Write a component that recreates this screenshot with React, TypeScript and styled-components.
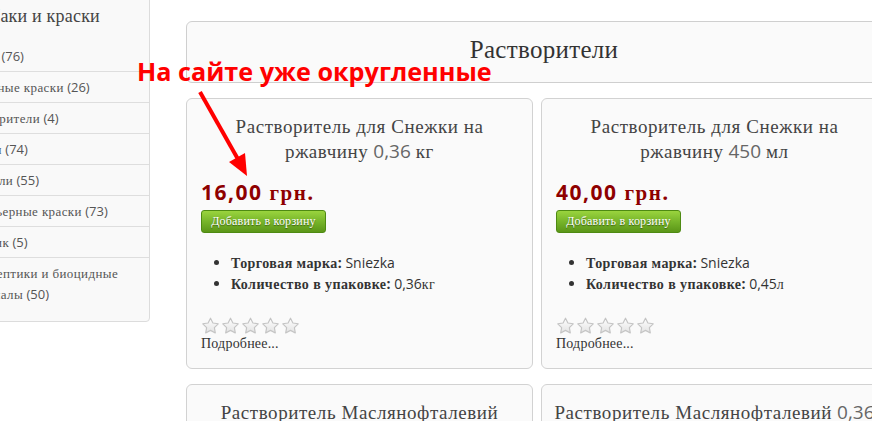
import React from 'react';
import styled, { createGlobalStyle } from 'styled-components';

const GlobalStyle = createGlobalStyle`
  html, body {
    margin: 0;
    padding: 0;
    background: #ffffff;
    overflow: hidden;
  }
  body {
    font-family: "Open Sans", "DejaVu Sans", sans-serif;
    color: #333;
  }
`

// кириллица на сайте уходит в Times, латиница и цифры — Open Sans
const Cy = styled.span`
  font-family: "Liberation Serif", "Times New Roman", serif;
  letter-spacing: 0.03em;
`

const mix = (text: string) =>
  text.split(/([\u0400-\u04FF]+(?:\s+[\u0400-\u04FF]+)*)/).map((part, i) =>
    i % 2 === 1 ? <Cy key={i}>{part}</Cy> : <React.Fragment key={i}>{part}</React.Fragment>
  );

const Page = styled.div`
  position: relative;
  display: flex;
  align-items: flex-start;
  margin-left: -70px;
  width: 1000px;
`

const Sidebar = styled.div`
  box-sizing: border-box;
  width: 220px;
  margin-top: -20px;
  padding: 0 0 12px;
  background: #f9f9f9;
  border: 1px solid #dcdcdc;
  border-radius: 4px;
  flex-shrink: 0;
`

const SideTitle = styled.div`
  font-family: "Liberation Serif", serif;
  font-size: 18px;
  letter-spacing: 0.2px;
  line-height: 24px;
  color: #444;
  padding: 23px 0 13px 57px;
`

const SideList = styled.ul`
  list-style: none;
  margin: 0;
  padding: 0;
`

const SideItem = styled.li`
  padding: 5px 8px 4px 29px;
  font-size: 13px;
  line-height: 21px;
  color: #555;
  & + li {
    border-top: 1px solid #dedede;
  }
`

const Main = styled.div`
  width: 716px;
  margin: 21px 0 0 36px;
  flex-shrink: 0;
`

const HeaderPanel = styled.div`
  box-sizing: border-box;
  height: 62px;
  border: 1px solid #cfcfcf;
  border-radius: 6px;
  background: #fafafa;
  font-family: "Liberation Serif", serif;
  font-size: 25px;
  letter-spacing: 0.3px;
  line-height: 56px;
  text-align: center;
  color: #333;
`

const CardGrid = styled.div`
  display: grid;
  grid-template-columns: 347px 347px;
  column-gap: 8px;
  row-gap: 15px;
  margin-top: 15px;
`

const Card = styled.div`
  box-sizing: border-box;
  height: 271px;
  padding: 15px 14px 15px;
  border: 1px solid #d2d2d2;
  border-radius: 6px;
  background: #fafafa;
  display: flex;
  flex-direction: column;
  align-items: flex-start;
`

const CardTitle = styled.div`
  align-self: stretch;
  margin: 0 -4px;
  font-size: 19px;
  line-height: 24px;
  text-align: center;
  color: #666;
  ${Cy} {
    color: #444;
  }
`

const Price = styled.div`
  margin-top: 16px;
  font-size: 21px;
  font-weight: 700;
  line-height: 24px;
  letter-spacing: 1.5px;
  color: #8e0000;
  ${Cy} {
    letter-spacing: 1.5px;
  }
`

const CartButton = styled.button`
  margin-top: 5px;
  box-sizing: border-box;
  width: 125px;
  height: 28px;
  padding: 0;
  border: 1px solid #4e8a12;
  border-radius: 3px;
  background: linear-gradient(to bottom, #9ad43e 0%, #77b52a 50%, #5b9618 100%);
  font-family: "Liberation Serif", serif;
  font-size: 12px;
  letter-spacing: 0.2px;
  color: #ffffff;
  text-shadow: 0 1px 1px rgba(0, 0, 0, 0.45);
  cursor: pointer;
`

const Props = styled.ul`
  margin: 20px 0 0;
  padding: 0 0 0 30px;
  font-size: 14px;
  line-height: 20px;
  color: #333;
  b {
    font-weight: 700;
  }
`

const Stars = styled.div`
  display: flex;
  gap: 1px;
  margin-top: 22px;
  height: 17px;
`

const More = styled.a`
  margin-top: 1px;
  font-family: "Liberation Serif", serif;
  font-size: 14px;
  letter-spacing: 0.2px;
  line-height: 18px;
  color: #333;
  text-decoration: none;
`

const Note = styled.div`
  position: absolute;
  left: 207px;
  top: 54px;
  font-family: "Open Sans", sans-serif;
  font-weight: 700;
  font-size: 25.2px;
  line-height: 34px;
  color: #ff0000;
  white-space: nowrap;
`

const Arrow = styled.svg`
  position: absolute;
  left: 70px;
  top: 0;
  pointer-events: none;
`

const Star = () => (
  <svg width="19" height="17" viewBox="0 0 24 22">
    <defs>
      <linearGradient id="sg" x1="0" y1="0" x2="0" y2="1">
        <stop offset="0" stopColor="#ffffff" />
        <stop offset="1" stopColor="#e2e2e2" />
      </linearGradient>
    </defs>
    <path
      d="M12 1.5l3.1 6.3 6.9 1-5 4.9 1.2 6.9-6.2-3.3-6.2 3.3 1.2-6.9-5-4.9 6.9-1z"
      fill="url(#sg)"
      stroke="#c4c4c4"
      strokeWidth="1.5"
      strokeLinejoin="round"
    />
  </svg>
);

const categories = [
  'Эмали (76)',
  'Масляные краски (26)',
  'Растворители (4)',
  'Олифы (74)',
  'Шпатели (55)',
  'Интерьерные краски (73)',
  'Пластик (5)',
  'Антисептики и биоцидные материалы (50)',
];

type Product = { title: string; price: string; brand: string; pack: string };

const products: Product[] = [
  { title: 'Растворитель для Снежки на ржавчину 0,36 кг', price: '16,00 грн.', brand: 'Sniezka', pack: '0,36кг' },
  { title: 'Растворитель для Снежки на ржавчину 450 мл', price: '40,00 грн.', brand: 'Sniezka', pack: '0,45л' },
  { title: 'Растворитель Маслянофталевий 0,45л', price: '25,00 грн.', brand: 'Sniezka', pack: '0,45л' },
  { title: 'Растворитель Маслянофталевий 0,36 кг', price: '18,00 грн.', brand: 'Sniezka', pack: '0,36кг' },
];

function App() {
  return (
    <>
      <GlobalStyle />
      <Page>
        <Sidebar>
          <SideTitle>Лаки и краски</SideTitle>
          <SideList>
            {categories.map((c) => (
              <SideItem key={c}>{mix(c)}</SideItem>
            ))}
          </SideList>
        </Sidebar>
        <Main>
          <HeaderPanel>Растворители</HeaderPanel>
          <CardGrid>
            {products.map((p) => (
              <Card key={p.title}>
                <CardTitle>{mix(p.title)}</CardTitle>
                <Price>{mix(p.price)}</Price>
                <CartButton>Добавить в корзину</CartButton>
                <Props>
                  <li><b>{mix('Торговая марка:')}</b> {p.brand}</li>
                  <li><b>{mix('Количество в упаковке:')}</b> {mix(p.pack)}</li>
                </Props>
                <Stars>
                  {[0, 1, 2, 3, 4].map((i) => <Star key={i} />)}
                </Stars>
                <More href="#">Подробнее...</More>
              </Card>
            ))}
          </CardGrid>
        </Main>
        <Note>На сайте уже округленные</Note>
        <Arrow width="400" height="200">
          <line x1="200" y1="92" x2="239" y2="161" stroke="#ff0000" strokeWidth="4" />
          <polygon points="247,176 229,162 245,153" fill="#ff0000" />
        </Arrow>
      </Page>
    </>
  );
}

export default App;
